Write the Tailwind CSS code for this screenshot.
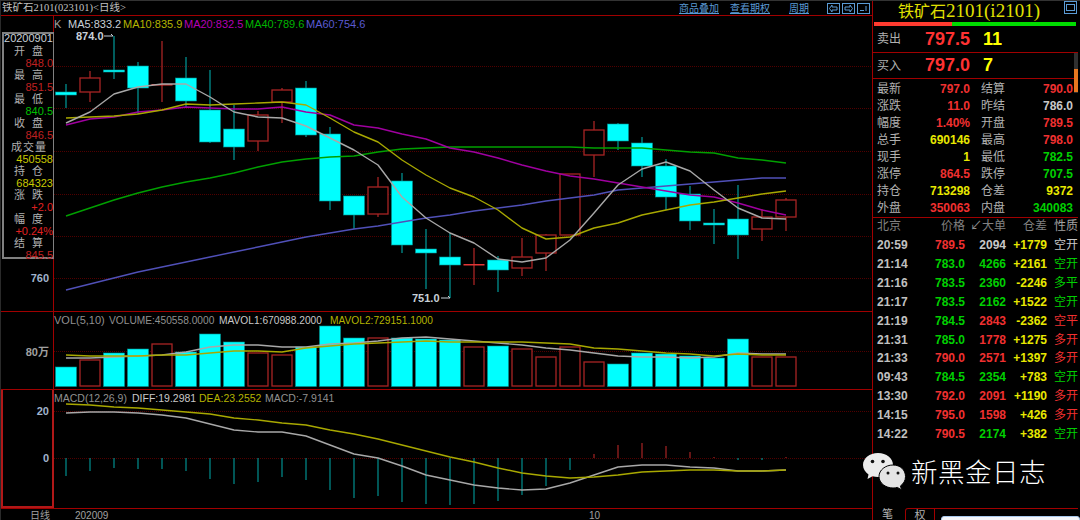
<!DOCTYPE html>
<html lang="zh">
<head>
    <meta charset="UTF-8">
    <title>铁矿石2101</title>
    <script src="https://cdn.jsdelivr.net/npm/@tailwindcss/browser@4"></script>
</head>
<body class="bg-black overflow-hidden">
<div class="relative w-[1080px] h-[520px] bg-black flex overflow-hidden font-['Liberation_Sans','Noto_Sans_CJK_SC',sans-serif] border-t border-[#333]">

    <!-- left: charts -->
    <div class="w-[872px] h-full flex flex-col shrink-0 border-l border-[#2a2a2a]">
        <div class="h-[15px] shrink-0 flex items-center border-b border-[#a00000] text-[#5b9bd5] text-[10px]">
            <span class="ml-[1px] w-[677px] text-[#c0c0c0] text-[10.5px] font-['Liberation_Serif','Noto_Sans_CJK_SC',serif]">铁矿石2101(023101)&lt;日线&gt;</span>
            <span class="w-[51px] underline">商品叠加</span>
            <span class="w-[59px] underline">查看期权</span>
            <span class="w-[38px] underline">周期</span>
            <div class="flex gap-[2px]">
                <svg width="13" height="11" viewBox="0 0 13 11" fill="none" stroke="#5b9bd5"><rect x=".5" y=".5" width="12" height="10"/><path d="M10 4H5V2L2.5 5.5 5 9V7h5z"/></svg>
                <svg width="13" height="11" viewBox="0 0 13 11" fill="none" stroke="#5b9bd5"><rect x=".5" y=".5" width="12" height="10"/><path d="M3 4h5V2l2.5 3.5L8 9V7H3z"/></svg>
                <svg width="13" height="11" viewBox="0 0 13 11" fill="none" stroke="#5b9bd5"><rect x=".5" y=".5" width="12" height="10"/><path d="M3 7.5h4M9 3v5"/></svg>
            </div>
        </div>

        <!-- kline pane -->
        <div class="h-[296px] shrink-0 flex border-b border-[#a00000]">
            <div class="w-[53px] shrink-0 relative border-r border-[#a00000]">
                <div class="mt-[16px] ml-[1px] w-[52px] h-[227px] border-2 border-r border-[#808080] text-[11px] leading-[12px] text-right">
                    <div class="h-[12px] mt-[-1px] text-[#c8d0d8] text-center leading-[11px]">20200901</div>
                    <div class="flex justify-between px-[10px] text-[#b0b0b0]"><span>开</span><span>盘</span></div>
                    <div class="text-[#c02020]">848.0</div>
                    <div class="flex justify-between px-[10px] text-[#b0b0b0]"><span>最</span><span>高</span></div>
                    <div class="text-[#c02020]">851.5</div>
                    <div class="flex justify-between px-[10px] text-[#b0b0b0]"><span>最</span><span>低</span></div>
                    <div class="text-[#00c000]">840.5</div>
                    <div class="flex justify-between px-[10px] text-[#b0b0b0]"><span>收</span><span>盘</span></div>
                    <div class="text-[#c02020]">846.5</div>
                    <div class="flex justify-between px-[7px] text-[#b0b0b0]"><span>成</span><span>交</span><span>量</span></div>
                    <div class="text-[#c8c800]">450558</div>
                    <div class="flex justify-between px-[10px] text-[#b0b0b0]"><span>持</span><span>仓</span></div>
                    <div class="text-[#c8c800]">684323</div>
                    <div class="flex justify-between px-[10px] text-[#b0b0b0]"><span>涨</span><span>跌</span></div>
                    <div class="text-[#e02020]">+2.0</div>
                    <div class="flex justify-between px-[10px] text-[#b0b0b0]"><span>幅</span><span>度</span></div>
                    <div class="text-[#e02020]">+0.24%</div>
                    <div class="flex justify-between px-[10px] text-[#b0b0b0]"><span>结</span><span>算</span></div>
                    <div class="text-[#c02020]">845.5</div>
                </div>
                <span class="absolute right-[4px] top-[256px] text-[11px] leading-[13px] font-bold text-[#a0b4cc]">760</span>
            </div>
            <div class="relative flex-1">
                <div class="absolute left-0 top-[2px] flex text-[11px] leading-[13px] whitespace-nowrap">
                    <span class="w-[14px] text-[#a0a0a0]">K</span>
                    <span class="w-[55px] text-[#c8d0d8]">MA5:833.2</span>
                    <span class="w-[61px] text-[#b4b400]">MA10:835.9</span>
                    <span class="w-[61px] text-[#b400b4]">MA20:832.5</span>
                    <span class="w-[61px] text-[#00b400]">MA40:789.6</span>
                    <span class="text-[#5a5ad0]">MA60:754.6</span>
                </div>
                <svg id="kline" class="block" width="818" height="295" viewBox="54 16 818 295"></svg>
            </div>
        </div>

        <!-- volume pane -->
        <div class="h-[78px] shrink-0 flex border-b border-[#a00000]">
            <div class="w-[53px] shrink-0 border-r border-[#a00000] text-right pr-[4px] pt-[34px] text-[11px] leading-[13px] font-bold text-[#a0a0a0]">80万</div>
            <div class="relative flex-1">
                <div class="absolute left-0 top-[2px] flex text-[10.2px] leading-[13px] whitespace-nowrap text-[#909090]">
                    <span class="w-[55px] text-[11px]">VOL(5,10)</span>
                    <span class="w-[110px]">VOLUME:450558.0000</span>
                    <span class="w-[111px] text-[#c8c8c8]">MAVOL1:670988.2000</span>
                    <span class="text-[#b4b400]">MAVOL2:729151.1000</span>
                </div>
                <svg id="vol" class="block" width="818" height="77" viewBox="54 312 818 77"></svg>
            </div>
        </div>

        <!-- macd pane -->
        <div class="h-[119px] shrink-0 flex border-b border-[#a00000]">
            <div class="w-[53px] shrink-0 border-2 border-t-0 border-[#b01818] relative text-[11px] leading-[13px] font-bold text-[#a0b4cc]">
                <span class="absolute right-[3px] top-[15px]">20</span>
                <span class="absolute right-[3px] top-[62px]">0</span>
            </div>
            <div class="relative flex-1">
                <div class="absolute left-0 top-[2px] flex text-[10.5px] leading-[13px] whitespace-nowrap text-[#909090]">
                    <span class="w-[78px]">MACD(12,26,9)</span>
                    <span class="w-[67px] text-[#c8c8c8]">DIFF:19.2981</span>
                    <span class="w-[66px] text-[#b4b400]">DEA:23.2552</span>
                    <span>MACD:-7.9141</span>
                </div>
                <svg id="macd" class="block" width="818" height="118" viewBox="54 390 818 118"></svg>
            </div>
        </div>

        <div class="flex-1 flex text-[10px] leading-[13px] text-[#a0a0a0]">
            <span class="w-[49px] shrink-0 text-right">日线</span>
            <span class="w-[25px] shrink-0"></span>
            <span class="w-[514px] shrink-0">202009</span>
            <span>10</span>
        </div>
    </div>

    <!-- right: quote panel -->
    <div class="flex-1 h-full flex flex-col border-l border-[#a00000] pr-[2px]">
        <div class="h-[21px] shrink-0 relative text-center text-[#e0e000] font-['Liberation_Serif','Noto_Sans_CJK_SC',serif] text-[19px] leading-[20px] whitespace-nowrap">
            <span class="mr-[13px]"><span class="text-[16px]">铁矿石</span>2101(i2101)</span>
            <svg class="absolute right-[1px] top-0" width="13" height="13" viewBox="0 0 13 13" fill="none" stroke="#5b9bd5"><rect x=".5" y=".5" width="12" height="12"/><rect x="2.5" y="3.5" width="8" height="6"/></svg>
        </div>
        <div class="h-[4px] shrink-0 ml-[1px] mr-[2px] flex">
            <div class="w-[78px] bg-[#ff3b30]"></div>
            <div class="flex-1 bg-[#00dd00]"></div>
        </div>
        <div class="h-[27px] shrink-0 flex items-center border-b border-[#a00000] text-[18px] font-bold">
            <span class="w-[50px] pl-[4px] text-[12px] font-normal text-[#b0b0b0]">卖出</span>
            <span class="w-[47px] text-[#ff3232] text-right mr-[2px]">797.5</span>
            <span class="ml-[11px] text-[#ffff00]">11</span>
        </div>
        <div class="h-[26px] shrink-0 flex items-center border-b border-[#a00000] text-[18px] font-bold">
            <span class="w-[50px] pl-[4px] text-[12px] font-normal text-[#b0b0b0]">买入</span>
            <span class="w-[47px] text-[#ff3232] text-right mr-[2px]">797.0</span>
            <span class="ml-[11px] text-[#ffff00]">7</span>
        </div>
        <div id="quote" class="h-[139px] shrink-0 grid grid-cols-[36px_57px_47px_56px] auto-rows-[17.1px] items-center pl-[4px] pt-[1px] border-b border-[#a00000] text-[12px] font-bold whitespace-nowrap"></div>
        <div class="h-[18px] shrink-0 text-[12px] leading-[17px] text-[#808080] whitespace-nowrap">
            <div class="grid grid-cols-[30px_58px_41px_41px_31px] pl-[4px]">
                <span>北京</span>
                <span class="text-right">价格</span>
                <span class="text-right"><span class="text-[#909090]">↙</span>大单</span>
                <span class="text-right">仓差</span>
                <span class="pl-[7px] text-[#a0a0a0]">性质</span>
            </div>
        </div>
        <div id="ticks" class="shrink-0 pl-[4px] text-[12px] font-bold whitespace-nowrap"></div>
        <div class="flex-1"></div>
        <div class="h-[12px] shrink-0 flex text-[11px] leading-[12px] text-[#b0b0b0]">
            <div class="w-[32px] text-center pr-[3px]">笔</div>
            <div class="w-[30px] text-center border-l border-r border-t border-[#a00000] rounded-tl-[3px]">权</div>
            <div class="flex-1 relative border-t border-[#a00000]">
                <div class="absolute left-[6px] right-[-2px] top-[7px] h-[10px] rounded-t-[3px] bg-[#f4f6fa] border border-[#a8c8ec]"></div>
            </div>
        </div>
    </div>

    <!-- watermark over the panel -->
    <div class="absolute left-[862px] top-[451px] flex items-center gap-[5px]">
        <svg width="44" height="38" viewBox="0 0 44 38">
            <path d="M16 1C7.5 1 1 6.5 1 13c0 4 2.2 7 5.5 9.5L5.5 27l5-2.8c1.800.5 3.600.8 5.500.8 8.500 0 15-5.400 15-12S24.500 1 16 1z" fill="#ececec"/>
            <path d="M31 13c-7.500 0-14 5-14 11.500S23.500 36 31 36c1.500 0 3-.2 4.300-.6l4.200 2.400-1-3.900c3-2.200 5-5.200 5-9.400C43.500 18 38.500 13 31 13z" fill="#e4e4e4" stroke="#000" stroke-width="1"/>
            <circle cx="10.500" cy="9.500" r="1.800" fill="#111"/><circle cx="21" cy="9.500" r="1.800" fill="#111"/>
            <circle cx="26" cy="21" r="1.500" fill="#111"/><circle cx="36" cy="21" r="1.500" fill="#111"/>
        </svg>
        <span class="text-[26.5px] leading-[34px] tracking-[0.5px] text-white font-['Noto_Sans_CJK_SC',sans-serif] font-light">新黑金日志</span>
    </div>
</div>

<script>
    const CYAN = '#00ffff', TEAL = '#008f8f', RED = '#a82424', DOT = '#500000';
    const xs = Array.from({ length: 31 }, (_, i) => 66 + 24 * i);

    // [bodyTop, bodyBottom, wickTop, wickBottom, up?] in page pixels
    const candles = [
        [92,95,84,108,0],[78,92,71,102,1],[70,72,36,79,0],[66,88,62,114,0],[84,85.5,41,102,2],
        [78,101,57,108,0],[110,142,70,143,0],[129,147,105,160,0],[115,141,111,151,1],[90,102,88,123,1],
        [88,135,81,137,0],[134,201,127,210,0],[196,215,196,229,0],[187,214,177,217,1],[181,245,173,253,0],
        [249,253,229,289,0],[257,265,233,298,0],[264,265.5,248,285,2],[260,270,256,292,0],[257,268,238,276,1],
        [235,253,234,271,1],[174,235,174,235,1],[130,155,121,177,1],[124,141,123,150,0],[143,166,137,177,0],
        [166,197,159,210,0],[194,221,186,230,0],[223,225,209,244,0],[219,235,185,259,0],[217,229,209,241,1],
        [200,217,198,231,1]
    ];
    const ma5 = [123,112,94,87,84,84,97,112,117,118,126,138,150,165,197,218,233,243,259,262,258,240,213,185,169,162,171,190,208,218,219];
    const ma10 = [118,117,116,114,110,104,105,104,103,102,105,118,132,142,160,175,188,197,210,228,239,237,228,223,215,210,205,202,198,194,191];
    const ma20 = [125,119,117,112,110,107,108,109,109,107,112,115,125,128,134,139,148,152,158,165,171,176,179,183,187,191,195,197,203,210,215];
    const ma40 = [216,208,200,193,187,182,178,173,167,162,159,157,156,152,149,148,147,147,147,147,147,147,148,148,148,150,152,153,158,160,163];
    const ma60 = [290,284,278,272,267,262,257,252,247,242,237,233,229,226,222,218,215,211,208,205,201,198,195,190,188,186,184,182,180,178,178];

    const volTops = [367,360,353,349,344,352,334,342,353,355,347,326,338,338,338,339,340,347,346,349,357,347,362,364,353,354,356,358,339,357,357];
    const volUp = [0,1,0,0,1,0,0,0,1,1,0,0,0,1,0,0,0,1,0,1,1,1,1,0,0,0,0,0,0,1,1];
    const mavol1 = [358,358,357,356,355,352,347,345,345,347,347,344,343,341,338,337,339,341,343,345,348,350,353,356,357,357,358,357,353,354,354];
    const mavol2 = [355,356,356,356,355,355,353,351,351,352,348,346,344,343,342,341,342,342,342,342,343,344,348,349,351,353,354,356,354,355,355];

    const diff = [413,412,412,413,415,418,424,430,432,432,436,445,454,458,466,475,480,485,488,490,489,483,475,467,465,465,467,468,471,471,470];
    const dea = [404,405,407,408,410,412,414,418,420,423,425,430,434,439,445,451,457,462,468,473,476,478,477,475,472,471,470,470,471,471,470];
    const hist = [476,471,468,469,469,471,479,484,482,477,480,490,498,496,502,504,505,504,501,495,486,470,454,445,443,446,452,457,460,460,457];

    function poly(ys, color) {
        const pts = ys.map((y, i) => xs[i] + ',' + y).join(' ');
        return `<polyline points="${pts}" fill="none" stroke="${color}" stroke-width="1.4" stroke-linejoin="round"/>`;
    }
    function grid(y) {
        return `<line x1="54" x2="872" y1="${y}" y2="${y}" stroke="${DOT}" stroke-dasharray="1 1"/>`;
    }

    let k = [66.5,108.5,151.5,194.5,236.5,278.5].map(grid).join('');
    candles.forEach((c, i) => {
        const x = xs[i], color = c[4] ? RED : TEAL;
        k += `<line x1="${x}" x2="${x}" y1="${c[2]}" y2="${c[3]}" stroke="${color}" stroke-width="1.3"/>`;
        if (c[4] === 2) {
            k += `<rect x="${x - 10.5}" y="${c[0]}" width="21" height="${c[1] - c[0]}" fill="#e23636"/>`;
        } else if (c[4] === 1) {
            k += `<rect x="${x - 10}" y="${c[0]}" width="20" height="${c[1] - c[0]}" fill="#000" stroke="${RED}" stroke-width="1.3"/>`;
        } else {
            k += `<rect x="${x - 10.5}" y="${c[0]}" width="21" height="${c[1] - c[0]}" fill="${CYAN}" stroke="${TEAL}" stroke-width=".6"/>`;
        }
    });
    k += poly(ma60, '#5050b8') + poly(ma40, '#00a000') + poly(ma20, '#a000a0') + poly(ma10, '#a8a800') + poly(ma5, '#a8a8a8');
    k += `<text x="76" y="40" font-size="11" font-weight="700" fill="#c8d0d8">874.0</text><path d="M104 36h9m-2-2 2 2" stroke="#c8d0d8" fill="none"/>`;
    k += `<text x="412" y="302" font-size="11" font-weight="700" fill="#c8d0d8">751.0</text><path d="M441 298h9m-2-2 2 2" stroke="#c8d0d8" fill="none"/>`;
    document.getElementById('kline').innerHTML = k;

    let v = grid(351.5);
    volTops.forEach((top, i) => {
        const x = xs[i];
        if (volUp[i]) v += `<rect x="${x - 10}" y="${top}" width="20" height="${386 - top}" fill="#000" stroke="${RED}" stroke-width="1.3"/>`;
        else v += `<rect x="${x - 10.5}" y="${top}" width="21" height="${386.5 - top}" fill="${CYAN}" stroke="${TEAL}" stroke-width=".6"/>`;
    });
    v += poly(mavol1, '#a8a8a8') + poly(mavol2, '#a8a800');
    document.getElementById('vol').innerHTML = v;

    let m = grid(411.5) + grid(458.5);
    hist.forEach((y, i) => {
        const color = y < 458 ? RED : TEAL;
        m += `<line x1="${xs[i]}" x2="${xs[i]}" y1="458" y2="${y}" stroke="${color}" stroke-width="1.2"/>`;
    });
    m += poly(diff, '#a8a8a8') + poly(dea, '#a8a800');
    document.getElementById('macd').innerHTML = m;

    const R = 'text-[#f03030]', G = 'text-[#00d000]', Y = 'text-[#e8e800]', W = 'text-[#c8c8c8]';
    const quote = [
        ['最新','797.0',R,'结算','790.0',R],['涨跌','11.0',R,'昨结','786.0',W],
        ['幅度','1.40%',R,'开盘','789.5',R],['总手','690146',Y,'最高','798.0',R],
        ['现手','1',Y,'最低','782.5',G],['涨停','864.5',R,'跌停','707.5',G],
        ['持仓','713298',Y,'仓差','9372',Y],['外盘','350063',R,'内盘','340083',G]
    ];
    document.getElementById('quote').innerHTML = quote.map(q => `
        <span class="font-normal text-[#b0b0b0]">${q[0]}</span><span class="text-right ${q[2]}">${q[1]}</span>
        <span class="font-normal text-[#b0b0b0] pl-[11px]">${q[3]}</span><span class="text-right ${q[5]}">${q[4]}</span>`).join('');

    const ticks = [
        ['20:59','789.5',R,'2094',W,'+1779','空开',W],['21:14','783.0',G,'4266',G,'+2161','空开',G],
        ['21:16','783.5',G,'2360',G,'-2246','多平',G],['21:17','783.5',G,'2162',G,'+1522','空开',G],
        ['21:19','784.5',G,'2843',R,'-2362','空平',R],['21:31','785.0',G,'1778',R,'+1275','多开',R],
        ['21:33','790.0',R,'2571',R,'+1397','多开',R],['09:43','784.5',G,'2354',G,'+783','空开',G],
        ['13:30','792.0',R,'2091',R,'+1190','多开',R],['14:15','795.0',R,'1598',R,'+426','多开',R],
        ['14:22','790.5',R,'2174',G,'+382','空开',G]
    ];
    document.getElementById('ticks').innerHTML = ticks.map(t => `
        <div class="h-[18.85px] grid grid-cols-[30px_58px_41px_41px_31px] items-center">
            <span class="text-[#c0c0c0]">${t[0]}</span><span class="text-right ${t[2]}">${t[1]}</span>
            <span class="text-right ${t[4]}">${t[3]}</span><span class="text-right ${Y}">${t[5]}</span>
            <span class="pl-[7px] font-normal ${t[7]}">${t[6]}</span>
        </div>`).join('');
</script>

<!-- scrollbar on the quote panel -->
<div class="absolute left-[1074px] top-[53px] w-[4px] h-[40px] bg-[#303030]"><div class="mt-[16px] h-[23px] bg-[#e87820]"></div></div>
</body>
</html>
